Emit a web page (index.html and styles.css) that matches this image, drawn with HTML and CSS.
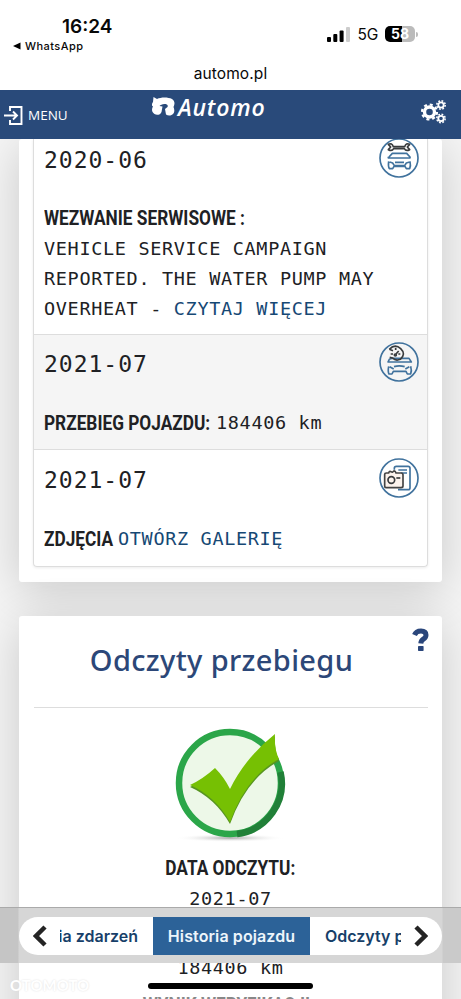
FILE: index.html
```html
<!DOCTYPE html>
<html lang="pl">
<head>
<meta charset="utf-8">
<title>Automo</title>
<link rel="stylesheet" href="styles.css">
</head>
<body>
<div class="phone">
  <header class="status">
    <div class="status-left">
      <div class="clock">16:24</div>
      <div class="back"><svg width="8" height="8" viewBox="0 0 8 8"><path d="M0 4 7.5.4v7.2z"/></svg>WhatsApp</div>
    </div>
    <div class="status-right">
      <svg class="signal" width="24" height="15" viewBox="0 0 24 15"><rect x="0" y="10" width="4" height="5" rx="1"/><rect x="6.3" y="7" width="4" height="8" rx="1"/><rect x="12.6" y="3.5" width="4" height="11.5" rx="1"/><rect x="19" y="0" width="4" height="15" rx="1" fill="#ccc"/></svg>
      <span class="net">5G</span>
      <span class="battery">58</span><i class="battery-tip"></i>
    </div>
    <div class="url">automo.pl</div>
  </header>
  <nav class="nav">
    <div class="menu">
      <svg width="19" height="19" viewBox="0 0 19 19" fill="none" stroke="#fff" stroke-width="1.9"><path d="M6 5V1h11.500v17H6v-4M0 9.500h13M9 5.500l4 4-4 4"/></svg>
      <span>MENU</span>
    </div>
    <div class="logo">
      <svg width="23" height="20" viewBox="0 0 23 20"><path fill="#fff" d="M1 5 1.500 0 5 2C9 0 16 0 20 2c3 2 3 5 1.500 8 1.500 3 1 7-2 8-2 1-4 .5-5.500-.5l-1-5.500 2.500-2c1-2-1-3-3-3-2.500 0-4 1-5 2l3 .5-1 5.500c-1 3-5 3.500-7 2-3-2-3-5-1.500-7.500C-.5 9-.5 7 1 5z"/></svg>
      <span>Automo</span>
    </div>
    <svg class="gears" width="25" height="24" viewBox="0 0 25 24" fill="none" stroke="#fff"><circle cx="8.500" cy="12" r="5" stroke-width="3.400"/><circle cx="8.500" cy="12" r="7.500" stroke-width="2.200" stroke-dasharray="3 2.890"/><circle cx="20" cy="5" r="2.700" stroke-width="1.800"/><circle cx="20" cy="5" r="4.200" stroke-width="1.500" stroke-dasharray="1.800 1.500"/><circle cx="20" cy="18.500" r="2.700" stroke-width="1.800"/><circle cx="20" cy="18.500" r="4.200" stroke-width="1.500" stroke-dasharray="1.800 1.500"/></svg>
  </nav>
  <main class="content">
    <section class="card history">
      <div class="events">
        <article class="event service">
          <div class="event-head"><h3>2020-06</h3>
            <svg class="badge" viewBox="0 0 120 120"><circle cx="60" cy="60" r="57"/><path d="M30 57 40 46h43l10 11v3H28v-4M32 72l9 3 5 8h31l5-8 10-3M29 70q-2 15 2 22h10l4-7h33l4 7h10q4-8 1-22M48 73h27"/><path class="ink" d="M28 19q11-5 15 7h34q4-12 15-7l-7 8 7 8q-11 6-16-3H44q-5 9-16 3l7-8z"/></svg>
          </div>
          <b class="label wezwanie">WEZWANIE SERWISOWE :</b>
          <p>VEHICLE SERVICE CAMPAIGN<br>REPORTED. THE WATER PUMP MAY<br>OVERHEAT - <a>CZYTAJ WIĘCEJ</a></p>
        </article>
        <article class="event alt">
          <div class="event-head"><h3>2021-07</h3>
            <svg class="badge" viewBox="0 0 120 120"><circle cx="60" cy="60" r="57"/><path d="M27 60l4-8 9-3h50l7 11zM29 73q-3 16 1 23h9l4-8h38l4 8h10q4-9 0-23M32 74l12 7M91 74l-12 7M45 74q16-5 32 0"/><path class="ink" d="M31 22q17-18 34-2t-1 32q-14 6-23-4l-9-2M31 22l11 4M50 17v7M64 36h-6M35 36h7M51 36l8-9"/><circle class="ink" cx="49" cy="39" r="3"/></svg>
          </div>
          <div class="row"><b class="label przebieg">PRZEBIEG POJAZDU:</b><span>184406 km</span></div>
        </article>
        <article class="event gallery">
          <div class="event-head"><h3>2021-07</h3>
            <svg class="badge" viewBox="0 0 120 120"><circle cx="60" cy="60" r="57"/><path d="M46 35V31q0-6 6-6h35q6 0 6 6v58q0 6-6 6H57M58 36h26M65 45h19"/><path class="camera" d="M17 49q0-4 5-4h7q2-7 7-4 5 4 8-2 5-1 7 6h15q6 0 6 5v34q0 5-6 5H21q-4 0-4-5z"/><circle class="ink" cx="37" cy="66" r="10"/><path class="ink" d="M52 60h12"/></svg>
          </div>
          <div class="row"><b class="label zdjecia">ZDJĘCIA</b><a>OTWÓRZ GALERIĘ</a></div>
        </article>
      </div>
    </section>
    <section class="card readings">
      <h2>Odczyty przebiegu</h2>
      <svg class="help" width="18" height="24" viewBox="0 0 18 24"><path d="M2.500 7Q4 3 9 3q5 0 5 4 0 2.500-2.500 4T8.800 15.500" fill="none" stroke="#2a467b" stroke-width="5"/><rect x="6" y="18" width="5.600" height="5" rx=".7" fill="#2a467b"/></svg>
      <hr>
      <svg class="check" width="120" height="120" viewBox="0 0 120 120">
        <defs><radialGradient id="s"><stop offset="0" stop-color="#777" stop-opacity=".65"/><stop offset="1" stop-color="#fff" stop-opacity="0"/></radialGradient></defs>
        <ellipse cx="60" cy="112" rx="55" ry="4" fill="url(#s)"/>
        <circle cx="60" cy="57" r="51" fill="#edf8e8" stroke="#2ba649" stroke-width="6.500"/>
        <path d="M110.500 46A51 51 0 0 1 67 108" fill="none" stroke="#218038" stroke-width="6.500"/>
        <path d="M20 60q13-6 25-17 9 9 15 21 15-31 45-55-1 15 4 25-33 18-49 63-15-26-40-37z" fill="#589521" transform="translate(0 1)"/>
        <path d="M20 59q13-6 25-17 9 9 15 21 15-31 45-55-1 15 4 25-33 18-49 63-15-26-40-37z" fill="#76c003"/>
      </svg>
      <b class="label">DATA ODCZYTU:</b>
      <span class="value">2021-07</span>
      <span class="value odometer">184406 km</span>
      <b class="label result">WYNIK WERYFIKACJI:</b>
    </section>
  </main>
  <footer class="dock">
    <div class="tabs">
      <svg width="14" height="22" viewBox="0 0 14 22"><path d="m12 2-9 9 9 9"/></svg>
      <div class="tab first"><span>Historia zdarzeń</span></div>
      <div class="tab active">Historia pojazdu</div>
      <div class="tab last">Odczyty przebiegu</div>
      <svg width="14" height="22" viewBox="0 0 14 22"><path d="m2 2 9 9-9 9"/></svg>
    </div>
  </footer>
  <div class="mark">OTOMOTO</div>
  <div class="home"></div>
</div>
</body>
</html>
```
FILE: styles.css
```css
* { box-sizing: border-box; }
body { margin: 0; }
.phone { position: relative; width: 461px; height: 999px; overflow: hidden; background: #f5f5f5; color: #202124; font-family: Inter, sans-serif; }
.status { position: relative; height: 90px; background: #fff; color: #080808; display: flex; justify-content: space-between; }
.clock { margin: 15px 0 0 62px; font-size: 19px; font-weight: 600; line-height: 24px; letter-spacing: 0; }
.back { display: flex; align-items: center; gap: 4px; margin: -1px 0 0 13px; font-size: 11px; font-weight: 500; line-height: 16px; letter-spacing: .45px; }
.status-right { display: flex; align-items: center; height: 20px; margin: 24px 43px 0 0; }
.net { margin: 0 7px 0 7px; font-size: 15.500px; letter-spacing: -.3px; }
.battery { width: 30px; height: 16px; border-radius: 5px; background: linear-gradient(90deg, #000 57%, #bbb 57%); color: #fff; text-align: center; font: 700 14px/16px Inter, sans-serif; }
.battery-tip { width: 2px; height: 5px; margin-left: 1px; border-radius: 0 2px 2px 0; background: #bbb; }
.url { position: absolute; top: 63px; left: 0; width: 461px; text-align: center; font-size: 15.500px; line-height: 22px; letter-spacing: .1px; }
.nav { position: relative; z-index: 2; display: flex; height: 49px; background: #294a7a; color: #fff; }
.menu { display: flex; align-items: center; gap: 5px; width: 152px; height: 49px; padding: 1px 0 0 4px; font: 13.500px "Open Sans", sans-serif; }
.logo { display: flex; gap: 3px; height: 26px; padding-top: 7px; font: italic 600 23px/20px "Open Sans", sans-serif; }
.logo span { width: 90px; letter-spacing: .8px; }
.gears { margin: 10px 15px 0 auto; }
.content { position: relative; padding: 0 19px; }
.card { background: #fff; border-radius: 3px; box-shadow: 0 8px 48px rgba(0,0,0,.18); }
.history { height: 443px; padding: 0 14px; }
.events { height: 428px; border: 1px solid #ddd; border-top: 0; border-radius: 0 0 4px 4px; box-shadow: 0 1px 3px rgba(0,0,0,.08); }
.event { height: 116px; padding: 8px 7px 0 10px; font: 18.500px/30px "DejaVu Sans Mono", monospace; letter-spacing: .66px; }
.service { height: 195px; padding-top: 0; }
.gallery { padding-top: 9px; }
.alt { background: #f5f5f5; border: solid #ddd; border-width: 1px 0; }
.event-head { display: flex; justify-content: space-between; height: 64px; }
.event p { margin: 1px 0 0; white-space: nowrap; }
h3 { margin: 4px 0 0; font: 23px/34px "DejaVu Sans Mono", monospace; letter-spacing: .98px; }
.badge { width: 40px; height: 40px; margin: -1px 1px 0 0; fill: none; stroke: #40729d; stroke-width: 5; stroke-linejoin: round; }
.badge .ink { stroke: #383b3d; }
.badge .camera { stroke: #444; fill: #fcf3ed; }
.row { display: flex; height: 32px; align-items: center; white-space: pre; }
a { color: #164874; }
.label { display: block; height: 30px; font: 700 20px/30px Roboto, sans-serif; letter-spacing: 0; white-space: nowrap; transform: scaleX(.863); transform-origin: 0 50%; }
.przebieg { width: 172px; }
.zdjecia { width: 74px; }
.readings { position: relative; display: flex; flex-direction: column; align-items: center; height: 440px; margin-top: 34px; }
h2 { margin: 21px 0 0 -18px; font: 500 29px/46px "Noto Sans", sans-serif; letter-spacing: .35px; color: #2c4778; white-space: nowrap; }
.help { position: absolute; right: 12px; top: 12px; }
hr { width: 394px; height: 1px; margin: 24px 0 18px; border: 0; background: #ddd; flex: none; }
.check { flex: none; margin: 0 2px 7px 0; }
.readings .label, .value { height: 30px; flex: none; transform-origin: 50% 50%; }
.value { margin-top: 1px; font: 18.500px/30px "DejaVu Sans Mono", monospace; letter-spacing: .62px; }
.odometer { margin-top: 39px; }
.readings .result { margin: 7px 4px 0 0; color: #888; }
.dock { position: absolute; z-index: 3; left: 0; top: 907px; width: 461px; height: 56px; padding: 9px 19px 0; background: linear-gradient(90deg, #c5c5c5 0 18px, #d6d6d6 19px 442px, #cacaca 443px); border-top: 1px solid #aaa; }
.tabs { display: flex; align-items: center; width: 423px; height: 38px; padding: 0 14px; border-radius: 20px; background: #fff; }
.tabs svg { flex: none; fill: none; stroke: #242424; stroke-width: 4.500; }
.tab { height: 38px; font: 600 16px/38px Inter, sans-serif; color: #173f69; white-space: nowrap; overflow: hidden; }
.tab.first { display: flex; justify-content: flex-end; width: 78px; margin: 0 15px 0 13px; }
.tab.active { width: 157px; flex: none; background: #2c6298; color: #edf5fb; text-align: center; letter-spacing: .1px; }
.tab.last { width: 76px; margin: 0 13px 0 15px; }
.mark { position: absolute; left: 10px; top: 977px; color: #fff; font: 700 15px/16px Lato, sans-serif; text-shadow: 0 0 2px #ddd; }
.home { position: absolute; left: 148px; top: 983px; width: 165px; height: 6px; border-radius: 3px; background: #000; }
```
